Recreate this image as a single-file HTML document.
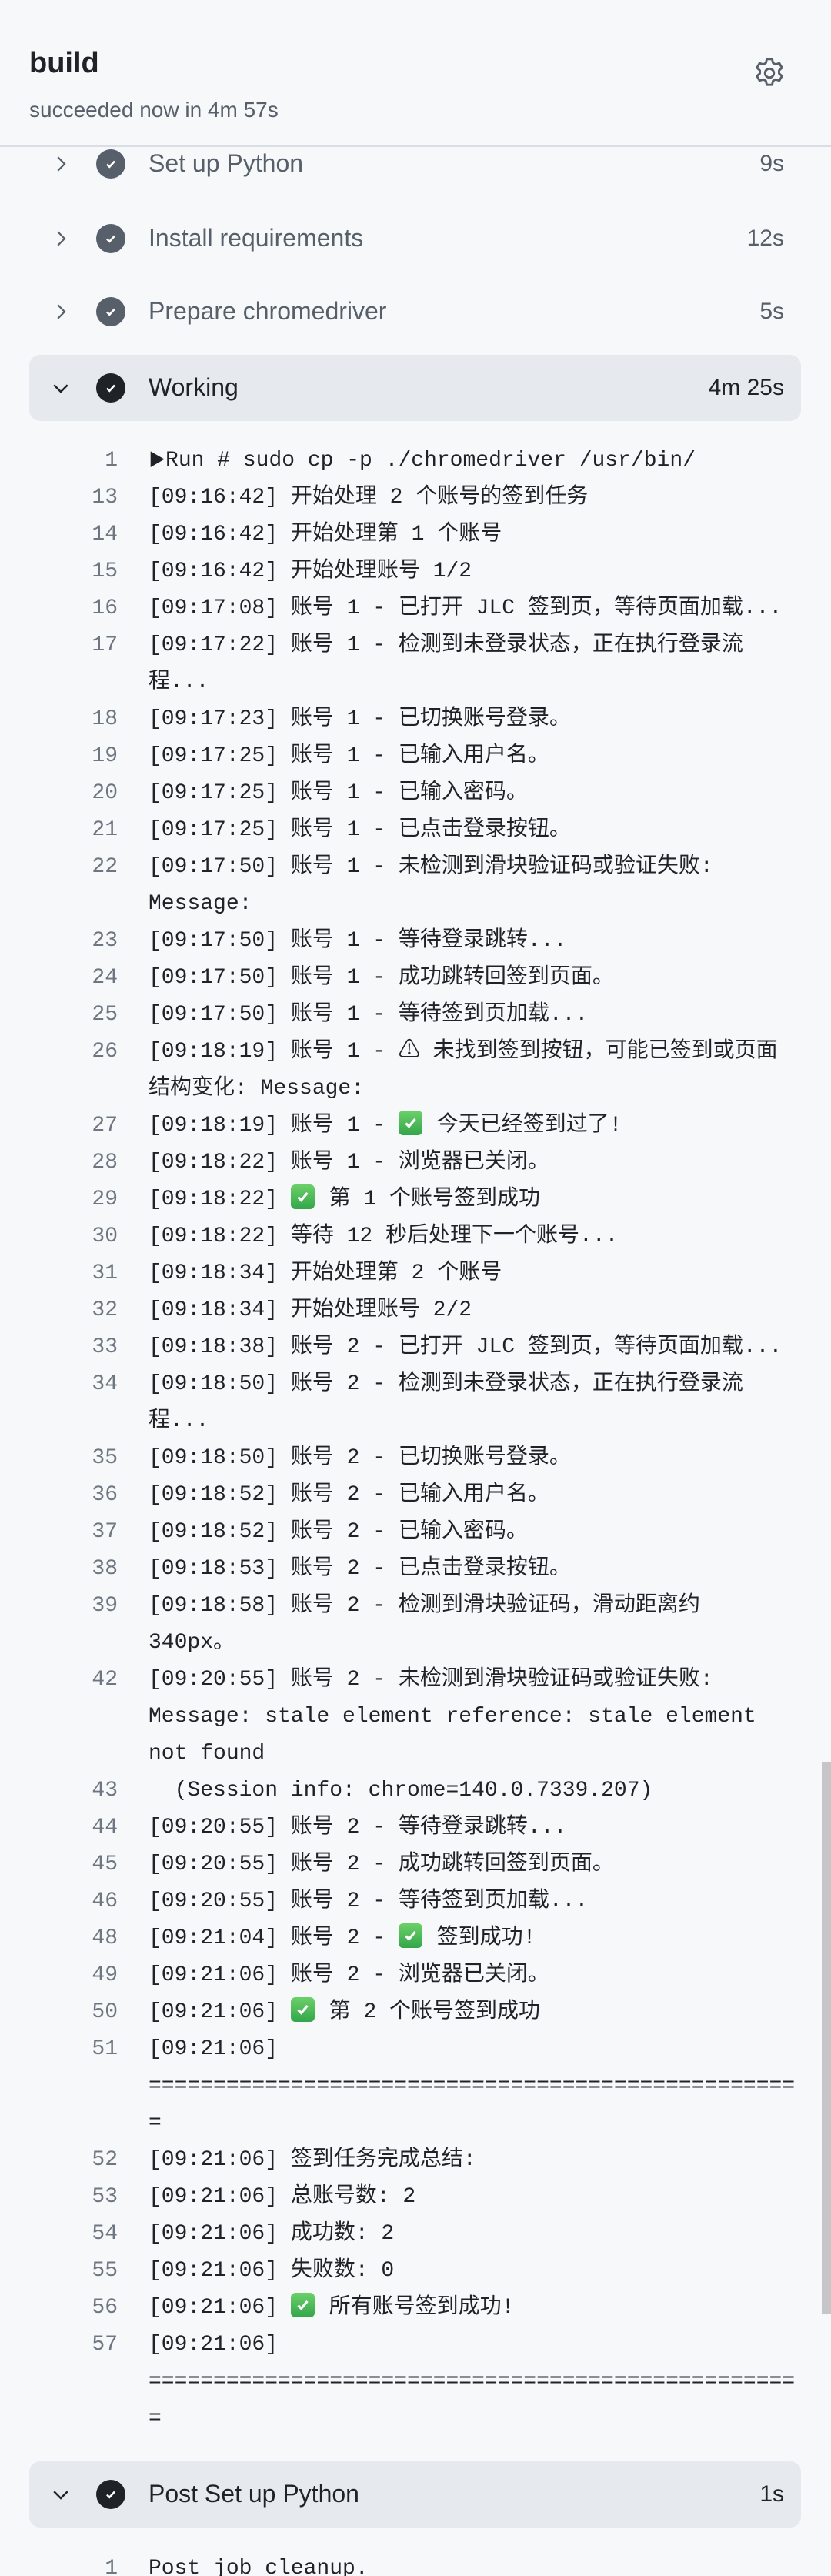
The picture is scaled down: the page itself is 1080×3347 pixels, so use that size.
<!DOCTYPE html>
<html><head><meta charset="utf-8"><style>
*{margin:0;padding:0;box-sizing:border-box}
html,body{width:1080px;height:3347px;overflow:hidden;background:#f6f8fa}
body{position:relative;font-family:"Liberation Sans","Noto Sans CJK SC",sans-serif;color:#1f2328}
.hdr{position:absolute;left:0;top:0;width:1080px;height:191px;background:#f6f8fa;border-bottom:2px solid #d8dee4;z-index:5}
.hdr .t{position:absolute;left:38px;top:61px;font-size:38px;font-weight:bold;color:#1f2328}
.hdr .s{position:absolute;left:38px;top:127px;font-size:28px;color:#57606a}
.step{position:absolute;left:38px;width:1003px;height:86px;border-radius:14px}
.step.open{background:#e6e9ee}
.step .chev{position:absolute;left:26px;top:28px;width:30px;height:30px}
.step .ic{position:absolute;left:87px;top:24px;width:38px;height:38px;border-radius:50%;background:#57606a}
.step.open .ic{background:#1f2328}
.step .ic svg{position:absolute;left:9px;top:9px}
.step .nm{position:absolute;left:155px;top:24px;font-size:32px;color:#57606a;white-space:nowrap}
.step.open .nm{color:#1f2328}
.step .du{position:absolute;right:22px;top:26px;font-size:30px;color:#57606a}
.step.open .du{color:#1f2328}
.ln{position:absolute;left:0;width:1080px;height:48px;line-height:48px;font-family:"Liberation Mono","Noto Sans CJK SC",monospace;font-size:28px;white-space:pre;color:#1f2328}
.ln .n{position:absolute;right:927px;color:#6e7781}
.ln .c{position:absolute;left:193px}
.ok{display:inline-block;width:31px;height:32px;border-radius:6px;background:linear-gradient(#6cd06a,#33a64a);vertical-align:-6px;position:relative;margin-right:2px}
.ok svg{position:absolute;left:5px;top:6px}
.sb{position:absolute;left:1068px;top:2289px;width:12px;height:718px;background:#c6c6c8}
</style></head><body>

<div class="hdr">
 <div class="t">build</div>
 <div class="s">succeeded now in 4m 57s</div>
 <svg style="position:absolute;left:977px;top:72px" width="46" height="46" viewBox="0 0 24 24" fill="none" stroke="#57606a" stroke-width="1.5" stroke-linejoin="round"><path d="M10.2 2.5h3.6l.6 2.6 1.7 1 2.6-.8 1.8 3.1-2 1.8v2l2 1.8-1.8 3.1-2.6-.8-1.7 1-.6 2.6h-3.6l-.6-2.6-1.7-1-2.6.8-1.8-3.1 2-1.8v-2l-2-1.8 1.8-3.1 2.6.8 1.7-1z"/><circle cx="12" cy="12" r="3"/></svg>
</div>

<div class="step" style="top:170px"><svg class="chev" viewBox="0 0 24 24" fill="none" stroke="#57606a" stroke-width="1.8"><path d="M9 5l7 7-7 7"/></svg><div class="ic"><svg width="20" height="20" viewBox="0 0 20 20" fill="none" stroke="#fff" stroke-width="2.6"><path d="M5 10.5l3.3 3.3L15 6.5"/></svg></div><div class="nm">Set up Python</div><div class="du">9s</div></div>
<div class="step" style="top:267px"><svg class="chev" viewBox="0 0 24 24" fill="none" stroke="#57606a" stroke-width="1.8"><path d="M9 5l7 7-7 7"/></svg><div class="ic"><svg width="20" height="20" viewBox="0 0 20 20" fill="none" stroke="#fff" stroke-width="2.6"><path d="M5 10.5l3.3 3.3L15 6.5"/></svg></div><div class="nm">Install requirements</div><div class="du">12s</div></div>
<div class="step" style="top:362px"><svg class="chev" viewBox="0 0 24 24" fill="none" stroke="#57606a" stroke-width="1.8"><path d="M9 5l7 7-7 7"/></svg><div class="ic"><svg width="20" height="20" viewBox="0 0 20 20" fill="none" stroke="#fff" stroke-width="2.6"><path d="M5 10.5l3.3 3.3L15 6.5"/></svg></div><div class="nm">Prepare chromedriver</div><div class="du">5s</div></div>
<div class="step open" style="top:461px"><svg class="chev" viewBox="0 0 24 24" fill="none" stroke="#1f2328" stroke-width="2"><path d="M5 9l7 7 7-7"/></svg><div class="ic"><svg width="20" height="20" viewBox="0 0 20 20" fill="none" stroke="#fff" stroke-width="2.6"><path d="M5 10.5l3.3 3.3L15 6.5"/></svg></div><div class="nm">Working</div><div class="du">4m 25s</div></div>

<div class="ln" style="top:575px"><span class="n">1</span><span class="c"><span style="font-size:22px">▶</span>Run # sudo cp -p ./chromedriver /usr/bin/</span></div>
<div class="ln" style="top:623px"><span class="n">13</span><span class="c">[09:16:42] 开始处理 2 个账号的签到任务</span></div>
<div class="ln" style="top:671px"><span class="n">14</span><span class="c">[09:16:42] 开始处理第 1 个账号</span></div>
<div class="ln" style="top:719px"><span class="n">15</span><span class="c">[09:16:42] 开始处理账号 1/2</span></div>
<div class="ln" style="top:767px"><span class="n">16</span><span class="c">[09:17:08] 账号 1 - 已打开 JLC 签到页，等待页面加载...</span></div>
<div class="ln" style="top:815px"><span class="n">17</span><span class="c">[09:17:22] 账号 1 - 检测到未登录状态，正在执行登录流</span></div>
<div class="ln" style="top:863px"><span class="c">程...</span></div>
<div class="ln" style="top:911px"><span class="n">18</span><span class="c">[09:17:23] 账号 1 - 已切换账号登录。</span></div>
<div class="ln" style="top:959px"><span class="n">19</span><span class="c">[09:17:25] 账号 1 - 已输入用户名。</span></div>
<div class="ln" style="top:1007px"><span class="n">20</span><span class="c">[09:17:25] 账号 1 - 已输入密码。</span></div>
<div class="ln" style="top:1055px"><span class="n">21</span><span class="c">[09:17:25] 账号 1 - 已点击登录按钮。</span></div>
<div class="ln" style="top:1103px"><span class="n">22</span><span class="c">[09:17:50] 账号 1 - 未检测到滑块验证码或验证失败:</span></div>
<div class="ln" style="top:1151px"><span class="c">Message:</span></div>
<div class="ln" style="top:1199px"><span class="n">23</span><span class="c">[09:17:50] 账号 1 - 等待登录跳转...</span></div>
<div class="ln" style="top:1247px"><span class="n">24</span><span class="c">[09:17:50] 账号 1 - 成功跳转回签到页面。</span></div>
<div class="ln" style="top:1295px"><span class="n">25</span><span class="c">[09:17:50] 账号 1 - 等待签到页加载...</span></div>
<div class="ln" style="top:1343px"><span class="n">26</span><span class="c">[09:18:19] 账号 1 - ⚠ 未找到签到按钮，可能已签到或页面</span></div>
<div class="ln" style="top:1391px"><span class="c">结构变化: Message:</span></div>
<div class="ln" style="top:1439px"><span class="n">27</span><span class="c">[09:18:19] 账号 1 - <span class="ok"><svg width="21" height="20" viewBox="0 0 20 20" fill="none" stroke="#fff" stroke-width="3.2"><path d="M4 10.5l4 4L16 5"/></svg></span> 今天已经签到过了!</span></div>
<div class="ln" style="top:1487px"><span class="n">28</span><span class="c">[09:18:22] 账号 1 - 浏览器已关闭。</span></div>
<div class="ln" style="top:1535px"><span class="n">29</span><span class="c">[09:18:22] <span class="ok"><svg width="21" height="20" viewBox="0 0 20 20" fill="none" stroke="#fff" stroke-width="3.2"><path d="M4 10.5l4 4L16 5"/></svg></span> 第 1 个账号签到成功</span></div>
<div class="ln" style="top:1583px"><span class="n">30</span><span class="c">[09:18:22] 等待 12 秒后处理下一个账号...</span></div>
<div class="ln" style="top:1631px"><span class="n">31</span><span class="c">[09:18:34] 开始处理第 2 个账号</span></div>
<div class="ln" style="top:1679px"><span class="n">32</span><span class="c">[09:18:34] 开始处理账号 2/2</span></div>
<div class="ln" style="top:1727px"><span class="n">33</span><span class="c">[09:18:38] 账号 2 - 已打开 JLC 签到页，等待页面加载...</span></div>
<div class="ln" style="top:1775px"><span class="n">34</span><span class="c">[09:18:50] 账号 2 - 检测到未登录状态，正在执行登录流</span></div>
<div class="ln" style="top:1823px"><span class="c">程...</span></div>
<div class="ln" style="top:1871px"><span class="n">35</span><span class="c">[09:18:50] 账号 2 - 已切换账号登录。</span></div>
<div class="ln" style="top:1919px"><span class="n">36</span><span class="c">[09:18:52] 账号 2 - 已输入用户名。</span></div>
<div class="ln" style="top:1967px"><span class="n">37</span><span class="c">[09:18:52] 账号 2 - 已输入密码。</span></div>
<div class="ln" style="top:2015px"><span class="n">38</span><span class="c">[09:18:53] 账号 2 - 已点击登录按钮。</span></div>
<div class="ln" style="top:2063px"><span class="n">39</span><span class="c">[09:18:58] 账号 2 - 检测到滑块验证码，滑动距离约</span></div>
<div class="ln" style="top:2111px"><span class="c">340px。</span></div>
<div class="ln" style="top:2159px"><span class="n">42</span><span class="c">[09:20:55] 账号 2 - 未检测到滑块验证码或验证失败:</span></div>
<div class="ln" style="top:2207px"><span class="c">Message: stale element reference: stale element</span></div>
<div class="ln" style="top:2255px"><span class="c">not found</span></div>
<div class="ln" style="top:2303px"><span class="n">43</span><span class="c">  (Session info: chrome=140.0.7339.207)</span></div>
<div class="ln" style="top:2351px"><span class="n">44</span><span class="c">[09:20:55] 账号 2 - 等待登录跳转...</span></div>
<div class="ln" style="top:2399px"><span class="n">45</span><span class="c">[09:20:55] 账号 2 - 成功跳转回签到页面。</span></div>
<div class="ln" style="top:2447px"><span class="n">46</span><span class="c">[09:20:55] 账号 2 - 等待签到页加载...</span></div>
<div class="ln" style="top:2495px"><span class="n">48</span><span class="c">[09:21:04] 账号 2 - <span class="ok"><svg width="21" height="20" viewBox="0 0 20 20" fill="none" stroke="#fff" stroke-width="3.2"><path d="M4 10.5l4 4L16 5"/></svg></span> 签到成功!</span></div>
<div class="ln" style="top:2543px"><span class="n">49</span><span class="c">[09:21:06] 账号 2 - 浏览器已关闭。</span></div>
<div class="ln" style="top:2591px"><span class="n">50</span><span class="c">[09:21:06] <span class="ok"><svg width="21" height="20" viewBox="0 0 20 20" fill="none" stroke="#fff" stroke-width="3.2"><path d="M4 10.5l4 4L16 5"/></svg></span> 第 2 个账号签到成功</span></div>
<div class="ln" style="top:2639px"><span class="n">51</span><span class="c">[09:21:06]</span></div>
<div class="ln" style="top:2687px"><span class="c">==================================================</span></div>
<div class="ln" style="top:2735px"><span class="c">=</span></div>
<div class="ln" style="top:2783px"><span class="n">52</span><span class="c">[09:21:06] 签到任务完成总结:</span></div>
<div class="ln" style="top:2831px"><span class="n">53</span><span class="c">[09:21:06] 总账号数: 2</span></div>
<div class="ln" style="top:2879px"><span class="n">54</span><span class="c">[09:21:06] 成功数: 2</span></div>
<div class="ln" style="top:2927px"><span class="n">55</span><span class="c">[09:21:06] 失败数: 0</span></div>
<div class="ln" style="top:2975px"><span class="n">56</span><span class="c">[09:21:06] <span class="ok"><svg width="21" height="20" viewBox="0 0 20 20" fill="none" stroke="#fff" stroke-width="3.2"><path d="M4 10.5l4 4L16 5"/></svg></span> 所有账号签到成功!</span></div>
<div class="ln" style="top:3023px"><span class="n">57</span><span class="c">[09:21:06]</span></div>
<div class="ln" style="top:3071px"><span class="c">==================================================</span></div>
<div class="ln" style="top:3119px"><span class="c">=</span></div>

<div class="step open" style="top:3198px"><svg class="chev" viewBox="0 0 24 24" fill="none" stroke="#1f2328" stroke-width="2"><path d="M5 9l7 7 7-7"/></svg><div class="ic"><svg width="20" height="20" viewBox="0 0 20 20" fill="none" stroke="#fff" stroke-width="2.6"><path d="M5 10.5l3.3 3.3L15 6.5"/></svg></div><div class="nm">Post Set up Python</div><div class="du">1s</div></div>

<div class="ln" style="top:3314px"><span class="n">1</span><span class="c">Post job cleanup.</span></div>

<div class="sb"></div>
</body></html>
